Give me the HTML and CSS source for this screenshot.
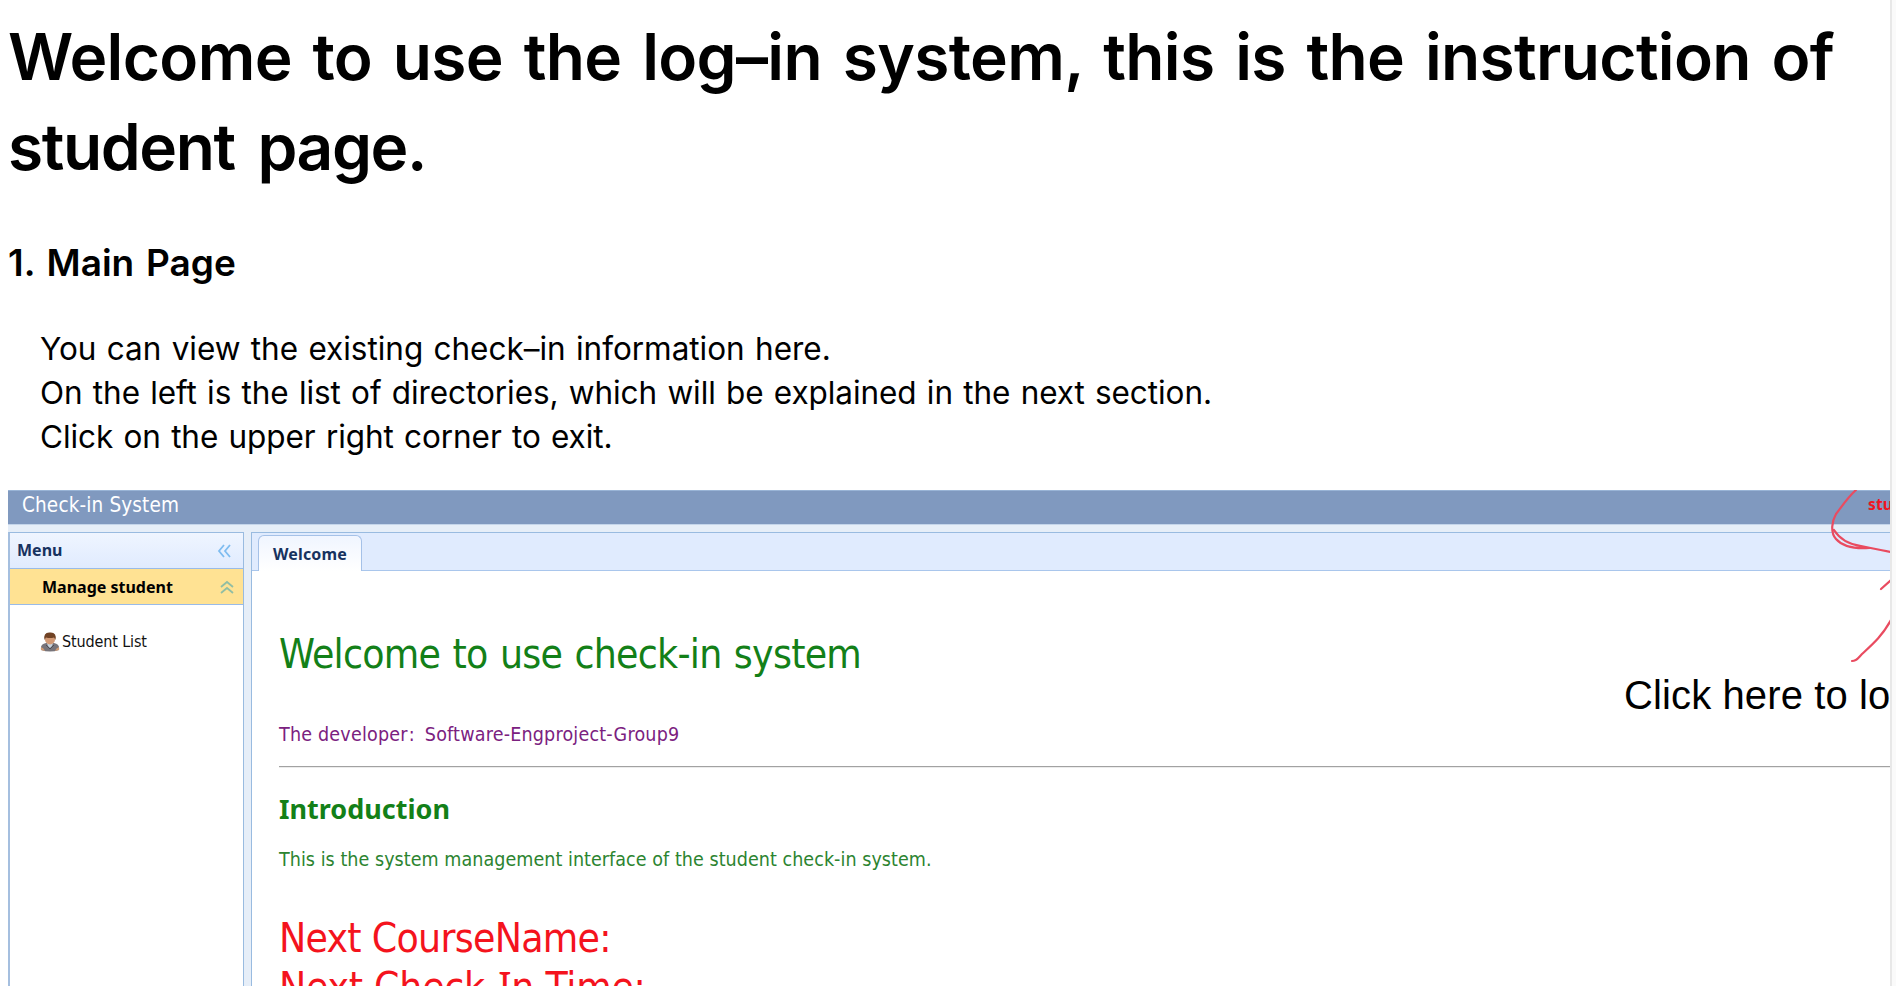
FILE: index.html
```html
<!DOCTYPE html>
<html lang="en">
<head>
<meta charset="utf-8">
<title>Student page instructions</title>
<link rel="stylesheet" href="styles.css">
</head>
<body>
<main class="doc">
  <h1 class="title"><span class="t1">Welcome to use the log–in system, this is the instruction of</span><br><span class="t2">student page.</span></h1>
  <h2 class="section">1. Main Page</h2>
  <p class="text"><span class="p1">You can view the existing check–in information here.</span><br>On the left is the list of directories, which will be explained in the next section.<br>Click on the upper right corner to exit.</p>
  <div class="shot">
    <header class="bar"><span>Check-in System</span><b class="user">stu</b></header>
    <div class="cols">
      <aside class="menu">
        <div class="menu-head"><span>Menu</span>
          <svg width="14" height="14" viewBox="0 0 14 14"><path d="M7 1 2 7l5 6M13 1 8 7l5 6"/></svg></div>
        <div class="menu-group"><span>Manage student</span>
          <svg width="14" height="14" viewBox="0 0 14 14"><path d="M1 7l6-5 6 5M1 13l6-5 6 5"/></svg></div>
        <div class="menu-item">
          <svg width="20" height="20" viewBox="0 0 20 20"><path d="M1 18Q0 12 6 11h8q6 1 5 7Q10 21 1 18Z" fill="#77747a"/><path d="M1 15q3 1 4 4l-4-1zM19 15q-3 1-4 4l4-1z" fill="#d09a72"/><path d="M7 11h6l-1 3-2 2-2-2z" fill="#c9d3dc"/><ellipse cx="10" cy="7.500" rx="5" ry="5" fill="#d39a75"/><path d="M4.500 8Q3 0 10 .5 17 0 15.500 8L14 5.500Q10 6.500 6 5.500Z" fill="#704224"/><path d="M6 13l4 4 4-4" fill="none" stroke="#4e4d55"/></svg><span>Student List</span></div>
      </aside>
      <section class="main">
        <nav class="tabs"><div class="tab">Welcome</div></nav>
        <div class="content">
          <div class="hello">Welcome to use check-in system</div>
          <div class="dev">The developer<span class="colon">:</span>Software-Engproject-Group9</div>
          <div class="rule"></div>
          <h3 class="intro">Introduction</h3>
          <div class="desc">This is the system management interface of the student check-in system.</div>
          <div class="next"><span class="n1">Next CourseName:</span><br><span class="n2">Next Check-<span class="serif-i">I</span>n Time:</span></div>
        </div>
      </section>
    </div>
    <svg class="marks" width="84" height="180" viewBox="0 0 84 180"><path d="M50 0C43 6 36 16 30 24c-4 7-6 18 0 25 7 8 18 10 33 9M28 40c5 8 12 14 27 16 14 3 20 4 30 6M75 99l10-9M46 171c5 0 6-3 10-7 12-11 20-18 29-34"/></svg>
    <div class="note">Click here to lo</div>
  </div>
</main>
</body>
</html>
```
FILE: styles.css
```css
body { margin: 0; background: #fafafa; color: #000; overflow: hidden; font-family: Inter, "Liberation Sans", sans-serif; }
.doc { box-sizing: border-box; width: 1892px; height: 986px; overflow: hidden; padding: 12px 0 0 8px; background: #fff; border-right: 2px solid #e8e8e8; white-space: nowrap; }
.title { margin: 0; font-size: 64px; line-height: 90px; font-weight: 600; }
.t1 { letter-spacing: -.65px; word-spacing: 5.2px; }
.t2 { letter-spacing: -1.4px; word-spacing: 8px; }
.section { margin: 45px 0 0; font-size: 37px; line-height: 52px; font-weight: 600; word-spacing: 2.5px; letter-spacing: 0; }
.text { margin: 38px 0 31px 32px; font-size: 31.5px; line-height: 44px; word-spacing: 1.5px; letter-spacing: -.07px; }
.p1 { letter-spacing: -.02px; }
.shot { position: relative; width: 1882px; height: 496px; overflow: hidden; background: #e6eef8; font-family: "Noto Sans", sans-serif; }
.bar { box-sizing: border-box; height: 35px; border-top: 1px solid #99b4d6; border-bottom: 1px solid #c4d5ea; background: #8099bf; color: #fff; font-size: 20.5px; line-height: 28px; letter-spacing: .15px; display: flex; justify-content: space-between; padding-left: 14px; margin-bottom: 7px; }
.user { width: 22px; color: #f01520; font-size: 15.5px; line-height: 27px; }
.cols { display: flex; gap: 7px; height: 460px; }
.menu { box-sizing: border-box; width: 236px; border: 1px solid #99bbe0; border-left: 2px solid #a5bfdf; background: #fff; font-size: 16px; }
.menu-head, .menu-group { box-sizing: border-box; height: 36px; line-height: 35px; display: flex; justify-content: space-between; align-items: center; font-weight: 700; border-bottom: 1px solid #99bbe8; }
.menu-head { padding: 0 12px 0 7px; color: #17325f; background: linear-gradient(#eff5ff, #e0ebfe); }
.menu-group { padding: 1px 9px 0 32px; background: #ffe293; }
.menu-head svg, .menu-group svg { fill: none; stroke: #7ebcf0; stroke-width: 1.8; }
.menu-group svg { stroke: #91bea4; }
.menu-item { display: flex; align-items: center; line-height: 26px; letter-spacing: -.13px; margin: 24px 0 0 30px; gap: 2px; color: #111; }
.main { flex: 1; box-sizing: border-box; border: 1px solid #99bbe0; border-right: 0; background: #fff; }
.tabs { box-sizing: border-box; height: 38px; padding: 2px 0 0 6px; background: #e0ebfe; border-bottom: 1px solid #a9c6ec; }
.tab { box-sizing: border-box; width: 104px; height: 36px; border: 1px solid #a5c1e8; border-bottom: 0; border-radius: 6px 6px 0 0; background: linear-gradient(#f0f5ff, #fff); padding-left: 14px; color: #17325f; font-size: 16px; font-weight: 700; line-height: 37px; letter-spacing: .15px; }
.content { padding: 58px 0 0 27px; }
.hello, .dev, .desc, .next, .bar span, .menu-item { font-family: "DejaVu Sans Condensed", "DejaVu Sans", sans-serif; font-stretch: condensed; }
.hello { color: #138018; font-size: 40.5px; line-height: 50px; letter-spacing: -.75px; word-spacing: 1.5px; }
.dev { margin-top: 42px; color: #7b217f; font-size: 19.5px; line-height: 28px; letter-spacing: .2px; }
.colon { margin: 0 10px 0 1px; }
.rule { height: 1px; margin-top: 17px; background: #a2a2a2; border-bottom: 1px solid #ececec; }
.intro { margin: 23px 0 0; color: #138018; font-size: 27px; line-height: 36px; }
.desc { margin-top: 19px; color: #2c8430; font-size: 19.5px; line-height: 28px; letter-spacing: .05px; }
.next { margin-top: 40px; color: #f4131d; font-size: 40.5px; line-height: 49px; }
.n1 { letter-spacing: -.72px; }
.n2 { letter-spacing: -.25px; }
.serif-i { font-family: "Noto Sans", sans-serif; line-height: 0; }
.marks { position: absolute; right: 0; top: 0; fill: none; stroke: #e94b60; stroke-width: 2.2; stroke-linecap: round; }
.note { position: absolute; left: 1616px; top: 180px; color: #000; font-family: "Liberation Sans", Arial, sans-serif; font-size: 40px; line-height: 50px; letter-spacing: .12px; }
```
